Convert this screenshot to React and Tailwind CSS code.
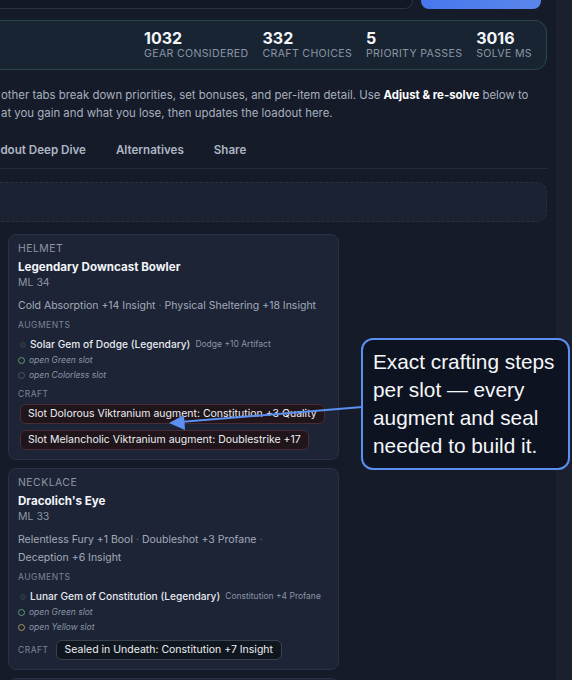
export default function App() {
  const cards = [
    {
      slot: 'HELMET',
      name: 'Legendary Downcast Bowler',
      ml: 'ML 34',
      effects: ['Cold Absorption +14 Insight', 'Physical Sheltering +18 Insight'],
      augments: [{ name: 'Solar Gem of Dodge (Legendary)', detail: 'Dodge +10 Artifact' }],
      open: [
        { label: 'open Green slot', ring: 'border-[#5f9a72]' },
        { label: 'open Colorless slot', ring: 'border-[#4a5264]' },
      ],
      craft: [
        'Slot Dolorous Viktranium augment: Constitution +3 Quality',
        'Slot Melancholic Viktranium augment: Doublestrike +17',
      ],
      stacked: true,
    },
    {
      slot: 'NECKLACE',
      name: "Dracolich's Eye",
      ml: 'ML 33',
      effects: ['Relentless Fury +1 Bool', 'Doubleshot +3 Profane', 'Deception +6 Insight'],
      augments: [{ name: 'Lunar Gem of Constitution (Legendary)', detail: 'Constitution +4 Profane' }],
      open: [
        { label: 'open Green slot', ring: 'border-[#5f9a72]' },
        { label: 'open Yellow slot', ring: 'border-[#a8945a]' },
      ],
      craft: ['Sealed in Undeath: Constitution +7 Insight'],
      stacked: false,
    },
  ];

  const stats = [
    ['1032', 'GEAR CONSIDERED'],
    ['332', 'CRAFT CHOICES'],
    ['5', 'PRIORITY PASSES'],
    ['3016', 'SOLVE MS'],
  ];

  return (
    <div className="relative w-[572px] h-[680px] overflow-hidden bg-[#151b29] font-['Inter',sans-serif]">
      {/* scrollbar strip */}
      <div className="absolute right-0 top-0 h-full w-[16px] bg-[#1a202d] border-l border-[#20273444]" />

      <div className="w-[547px]">
        {/* top input + button */}
        <div className="flex gap-2 mt-[-27px] w-[541px]">
          <div className="-ml-[20px] flex-1 h-[36px] rounded-lg border border-[#2b3343] bg-[#121826]" />
          <div className="w-[120px] h-[36px] rounded-lg bg-gradient-to-r from-[#4777ee] to-[#5a86ea]" />
        </div>

        {/* stats */}
        <div className="mt-[11px] -ml-[20px] w-[567px] h-[50px] rounded-xl border border-[#2a4550] bg-[#182432] flex items-center justify-end gap-[14px] pr-[14px]">
          {stats.map(([n, l]) => (
            <div key={l} className="flex flex-col">
              <span className="text-[16px] leading-[18px] font-bold text-[#f3f5f8]">{n}</span>
              <span className="text-[10.6px] leading-[14px] tracking-[0.03em] text-[#8a94a4]">{l}</span>
            </div>
          ))}
        </div>

        {/* description */}
        <div className="mt-[16px] pl-[1px] text-[11.4px] leading-[18px] text-[#a8b0be] whitespace-nowrap">
          <div>
            other tabs break down priorities, set bonuses, and per-item detail. Use{' '}
            <span className="font-bold text-white">Adjust &amp; re-solve</span> below to
          </div>
          <div>at you gain and what you lose, then updates the loadout here.</div>
        </div>

        {/* tabs */}
        <div className="mt-[18px] pb-[8px] border-b border-[#252d3c] flex whitespace-nowrap text-[11.6px] leading-[20px] font-semibold text-[#aeb6c4]">
          <span className="-ml-[20px]">Loadout Deep Dive</span>
          <span className="ml-[30px]">Alternatives</span>
          <span className="ml-[30px]">Share</span>
        </div>

        {/* empty panel */}
        <div className="mt-[13px] -ml-[20px] w-[567px] h-[40px] rounded-[10px] border border-dashed border-[#283042] bg-[#1b2232]" />

        {/* cards */}
        <div className="mt-[12px] ml-[8px] w-[331px] flex flex-col gap-[8px]">
          {cards.map((c) => (
            <div key={c.slot} className="rounded-lg border border-[#283145] bg-[#1c2436] pt-[7px] pb-[9px] pl-[9px] pr-[9px]">
              <div className="text-[10.5px] leading-[14px] tracking-[0.04em] text-[#8d96a6]">{c.slot}</div>
              <div className="mt-[2px] text-[11.6px] leading-[18px] font-bold text-[#f3f5f8]">{c.name}</div>
              <div className="text-[10.5px] leading-[14px] text-[#8d96a6]">{c.ml}</div>
              <div className="mt-[7px] text-[10.5px] leading-[18px] text-[#a3abb9]">
                {c.effects.map((e, i) => (
                  <span key={e}>
                    <span className="whitespace-nowrap">{e}</span>
                    {i < c.effects.length - 1 && <span className="text-[#6b7383]"> · </span>}
                    {i < c.effects.length - 1 && ' '}
                  </span>
                ))}
              </div>
              <div className="mt-[4px] text-[8.5px] leading-[12px] tracking-[0.06em] text-[#7d8696]">AUGMENTS</div>
              <div className="mt-[5px]">
                {c.augments.map((a) => (
                  <div key={a.name} className="flex items-center h-[17px] whitespace-nowrap">
                    <span className="ml-[2px] w-[6px] h-[6px] rounded-full bg-[#262e3e] border border-[#343c4c]" />
                    <span className="ml-[4px] text-[10.2px] font-medium text-[#e6e9ee]">{a.name}</span>
                    <span className="ml-[5px] text-[8.5px] text-[#8b94a3]">{a.detail}</span>
                  </div>
                ))}
                {c.open.map((o) => (
                  <div key={o.label} className="flex items-center h-[15px] whitespace-nowrap">
                    <span className={`w-[7px] h-[7px] rounded-full border ${o.ring} bg-[#1c2436]`} />
                    <span className="ml-[4px] text-[8.5px] italic text-[#8b94a3]">{o.label}</span>
                  </div>
                ))}
              </div>
              {c.stacked ? (
                <>
                  <div className="mt-[5px] text-[8.5px] leading-[12px] tracking-[0.06em] text-[#7d8696]">CRAFT</div>
                  <div className="mt-[4px] ml-[2px] flex flex-col items-start gap-[6px]">
                    {c.craft.map((p) => (
                      <span key={p} className="h-[20px] px-[7px] flex items-center rounded-md border border-[#4a2b36] bg-[#1f151b] text-[10.5px] text-[#eceef2] whitespace-nowrap">
                        {p}
                      </span>
                    ))}
                  </div>
                </>
              ) : (
                <div className="mt-[5px] flex items-center gap-[7px]">
                  <span className="text-[8.5px] tracking-[0.06em] text-[#7d8696]">CRAFT</span>
                  {c.craft.map((p) => (
                    <span key={p} className="h-[20px] px-[8px] flex items-center rounded-md border border-[#39424f] bg-[#10161e] text-[10.5px] text-[#eceef2] whitespace-nowrap">
                      {p}
                    </span>
                  ))}
                </div>
              )}
            </div>
          ))}
          <div className="h-[40px] rounded-lg border border-[#283145] bg-[#1c2436]" />
        </div>
      </div>

      {/* annotation arrow */}
      <svg className="absolute left-0 top-0" width="572" height="680" viewBox="0 0 572 680">
        <line x1="362" y1="407" x2="180" y2="422" stroke="#5b8ff0" strokeWidth="2" />
        <polygon points="169,423 184,415 185,430" fill="#5b8ff0" />
      </svg>

      {/* callout */}
      <div className="absolute left-[361px] top-[338px] w-[209px] h-[132px] rounded-xl border-2 border-[#5b8ff0] bg-[#0e1322] px-[10px] py-[8px]">
        <p className="font-['Liberation_Sans',Arial,sans-serif] text-[20.8px] leading-[28px] text-[#f5f7fa]">
          Exact crafting steps per slot — every augment and seal needed to build it.
        </p>
      </div>
    </div>
  );
}
